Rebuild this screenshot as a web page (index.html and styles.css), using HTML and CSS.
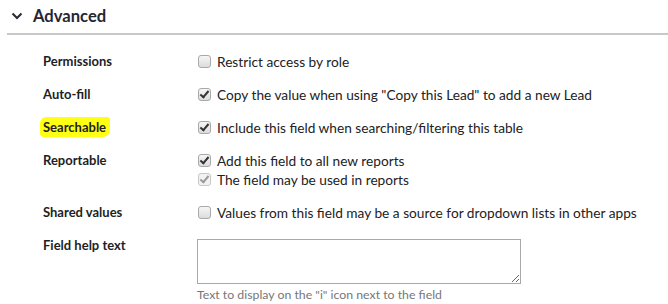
FILE: index.html
```html
<!DOCTYPE html>
<html>
<head>
<meta charset="utf-8">
<link rel="stylesheet" href="styles.css">
</head>
<body>
<div class="section">
  <div class="header">
    <svg class="chev" width="12" height="8" viewBox="0 0 12 8"><path d="M1.5 1.5 L6 6 L10.5 1.5" fill="none" stroke="#2a2a35" stroke-width="2"/></svg>
    <span class="title">Advanced</span>
  </div>
  <div class="rule"></div>
  <div class="form">
    <div class="label">Permissions</div>
    <div class="opts">
      <div class="opt"><span class="cb"></span>Restrict access by role</div>
    </div>

    <div class="label">Auto-fill</div>
    <div class="opts">
      <div class="opt"><span class="cb on"></span>Copy the value when using "Copy this Lead" to add a new Lead</div>
    </div>

    <div class="label"><span class="hl">Searchable</span></div>
    <div class="opts">
      <div class="opt"><span class="cb on"></span>Include this field when searching/filtering this table</div>
    </div>

    <div class="label">Reportable</div>
    <div class="opts">
      <div class="opt"><span class="cb on"></span>Add this field to all new reports</div>
      <div class="opt"><span class="cb on dis"></span>The field may be used in reports</div>
    </div>

    <div class="label">Shared values</div>
    <div class="opts">
      <div class="opt"><span class="cb"></span>Values from this field may be a source for dropdown lists in other apps</div>
    </div>

    <div class="label">Field help text</div>
    <div class="opts">
      <textarea class="ta"></textarea>
      <div class="hint">Text to display on the "i" icon next to the field</div>
    </div>
  </div>
</div>
</body>
</html>
```

FILE: styles.css
```css
html, body {
  margin: 0;
  padding: 0;
  background: #fff;
}
body {
  font-family: Lato, "Liberation Sans", sans-serif;
  color: #222;
}
.header {
  display: flex;
  align-items: center;
  height: 32px;
  padding-left: 11px;
  gap: 10px;
}
.chev {
  display: block;
}
.title {
  font-weight: 700;
  font-size: 16.6px;
  color: #262630;
}
.rule {
  margin-left: 7px;
  margin-top: 1px;
  height: 2px;
  background: #c8c8c8;
}
.form {
  display: grid;
  grid-template-columns: 154px 1fr;
  row-gap: 14px;
  padding: 17px 0 0 43px;
}
.label {
  font-weight: 700;
  font-size: 13px;
  line-height: 19px;
  color: #1e1e24;
}
.hl {
  background: #ffff14;
  border-radius: 6px 3px 7px 4px;
  padding: 2px 4px 2px 3px;
  margin-left: -3px;
}
.opts {
  display: flex;
  flex-direction: column;
}
.opt {
  display: flex;
  align-items: center;
  font-size: 13.7px;
  line-height: 19px;
  color: #222;
}
.cb {
  box-sizing: border-box;
  width: 13px;
  height: 13px;
  margin: 0 6px 0 1px;
  border: 1px solid #a9a9a9;
  border-radius: 3px;
  background: linear-gradient(#f6f6f6, #dcdcdc);
  position: relative;
  flex: none;
}
.cb.on::after {
  content: "";
  position: absolute;
  left: 3px;
  top: 0px;
  width: 3px;
  height: 7px;
  border: solid #333;
  border-width: 0 2px 2px 0;
  transform: rotate(40deg);
}
.cb.dis {
  border-color: #c8c8c8;
  background: #f2f2f2;
}
.cb.dis::after {
  border-color: #9a9a9a;
}
.ta {
  box-sizing: border-box;
  width: 324px;
  height: 45px;
  margin: 3px 0 0 0;
  border: 1px solid #a9a9a9;
  padding: 2px;
  resize: both;
  font-family: inherit;
  display: block;
}
.hint {
  font-size: 12.3px;
  line-height: 18px;
  color: #777;
  margin-top: 2px;
}
```
